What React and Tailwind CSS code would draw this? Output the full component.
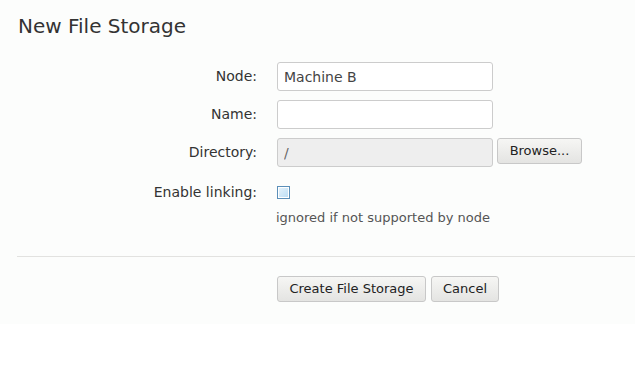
import React from 'react';

const font = { fontFamily: "'DejaVu Sans', Verdana, sans-serif" };

const Row = ({ label, children }) => (
  <div className="flex items-center">
    <label className="w-[257px] text-right text-[14px] text-[#333]">{label}</label>
    <div className="ml-[20px] flex items-center">{children}</div>
  </div>
);

const Button = ({ children, className = '' }) => (
  <button
    className={`h-[26px] whitespace-nowrap rounded-[3px] border border-[#c8c8c8] bg-gradient-to-b from-[#f6f6f4] to-[#e4e4e2] px-0 text-[13px] text-[#222] ${className}`}
  >
    {children}
  </button>
);

const inputCls =
  'h-[29px] w-[216px] rounded-[3px] border border-[#ccc] px-[6px] text-[14px] outline-none';

export default function App() {
  return (
    <div className="bg-white" style={font}>
      <div className="h-[324px] bg-[#fcfdfc] pt-[13px]">
        <h1 className="pl-[18px] text-[20px] leading-[26px] text-[#333]">New File Storage</h1>

        <div className="mt-[23px] flex flex-col gap-[9px]">
          <Row label="Node:">
            <input readOnly value="Machine B" className={`${inputCls} bg-white text-[#444]`} />
          </Row>
          <Row label="Name:">
            <input readOnly value="" className={`${inputCls} bg-white text-[#444]`} />
          </Row>
          <Row label="Directory:">
            <input readOnly value="/" className={`${inputCls} bg-[#eeeeee] text-[#666]`} />
            <Button className="ml-[4px] w-[85px] self-start">Browse...</Button>
          </Row>
        </div>

        <div className="mt-[15px] flex items-center">
          <label className="w-[257px] text-right text-[14px] text-[#333]">Enable linking:</label>
          <span className="ml-[20px] inline-block h-[13px] w-[13px] border border-[#5b8fb9] bg-gradient-to-br from-[#e8f4fc] to-[#b8dcf4] shadow-[inset_0_0_0_1px_#ffffff]" />
        </div>
        <div className="mt-[6px] pl-[276px] text-[13px] leading-[18px] text-[#555]">
          ignored if not supported by node
        </div>

        <div className="ml-[17px] mt-[29px] border-t border-[#e2e2e0]" />

        <div className="mt-[19px] flex gap-[5px] pl-[277px]">
          <Button className="w-[149px]">Create File Storage</Button>
          <Button className="w-[68px]">Cancel</Button>
        </div>
      </div>
    </div>
  );
}
